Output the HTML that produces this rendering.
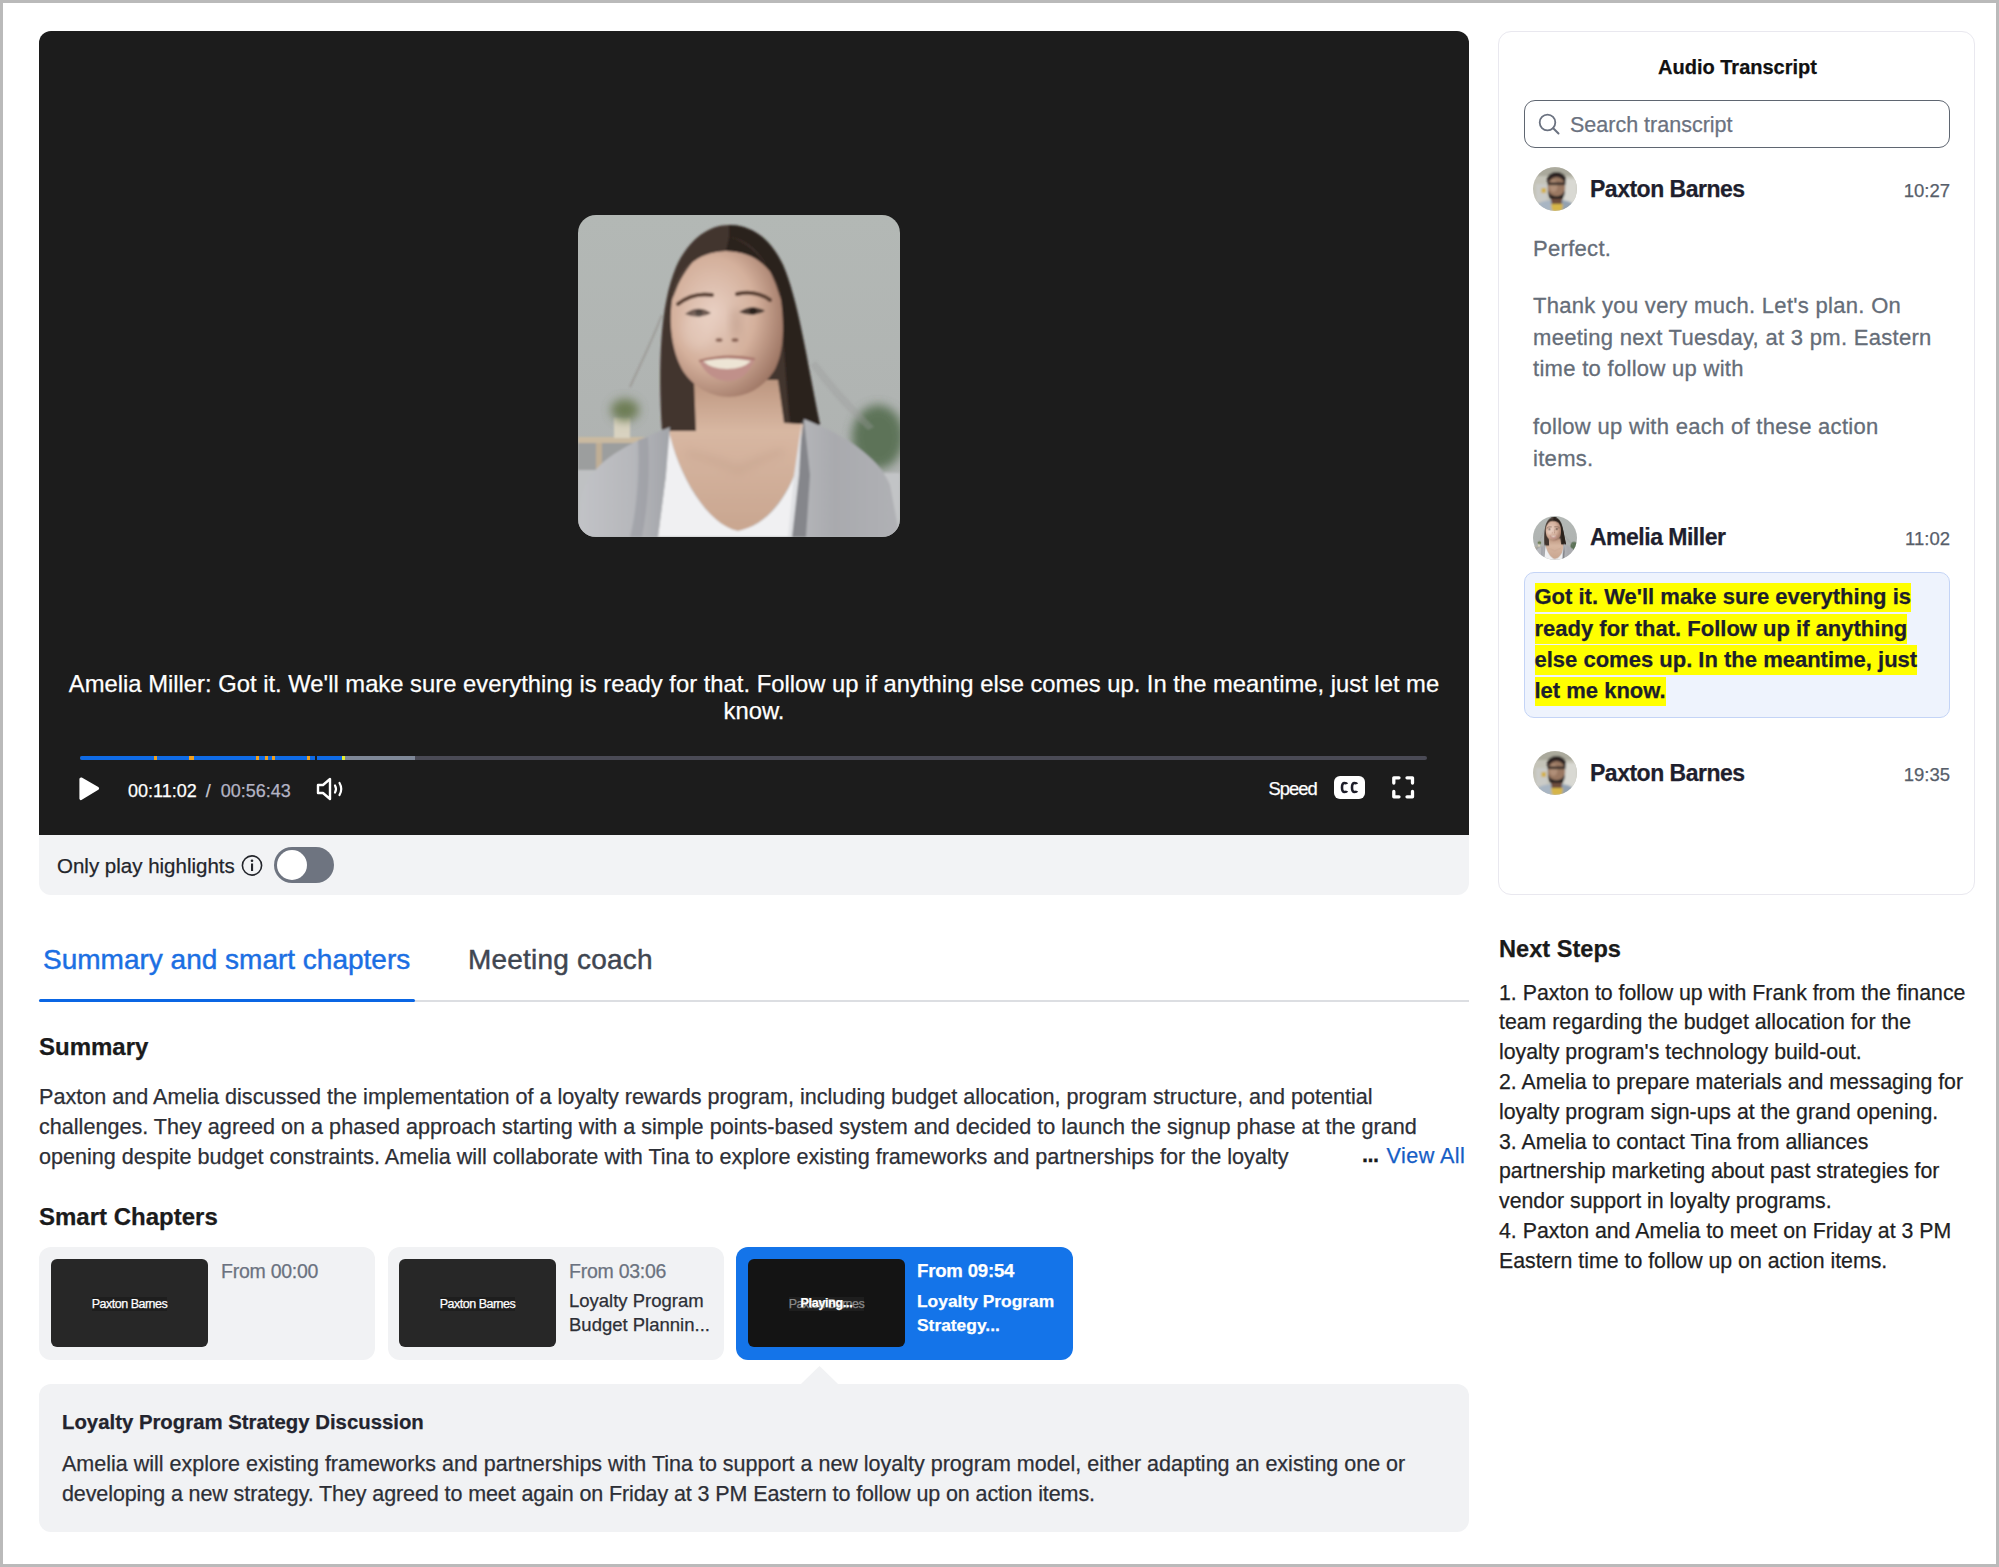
<!DOCTYPE html>
<html><head><meta charset="utf-8">
<style>
*{box-sizing:border-box;margin:0;padding:0}
html,body{width:1999px;height:1567px;overflow:hidden;background:#fff}
body{font-family:"Liberation Sans",sans-serif;position:relative;-webkit-text-stroke-width:0.25px}
.frame{position:absolute;left:0;top:0;width:1999px;height:1567px;border:3px solid #bababa;pointer-events:none;z-index:50}
.abs{position:absolute}
.nw{white-space:nowrap}
/* video */
#video{left:39px;top:31px;width:1430px;height:804px;background:#1c1c1c;border-radius:12px 12px 0 0;overflow:hidden}
#hl{left:39px;top:835px;width:1430px;height:60px;background:#f2f3f5;border-radius:0 0 12px 12px}
#photo{left:578px;top:215px;width:322px;height:322px;border-radius:18px;overflow:hidden}
.cap{color:#fff;font-size:23.8px;line-height:27px;text-align:center;width:1430px;left:39px;top:670px}
.seg{position:absolute;top:756px;height:4px}
.tm{font-size:18px;line-height:22px;top:780px;color:#fff}
/* panel */
#panel{left:1498px;top:31px;width:477px;height:864px;border:1.6px solid #e9e8ef;border-radius:13px}
.name{font-size:23px;line-height:26px;font-weight:700;color:#1f1f2e;left:1590px;letter-spacing:-0.5px}
.time{font-size:18.5px;line-height:26px;color:#575e6a;right:49px;text-align:right}
.tx{font-size:22px;line-height:31.5px;color:#656d78;left:1533px;letter-spacing:0.3px;-webkit-text-stroke:0.3px #656d78}
.yl{background:#ffff00;padding:2.5px 0 2px}
.thumb{width:157px;height:88px;background:#272727;border-radius:6px;text-align:center;line-height:88px}
.thumb span{font-size:12.5px;color:#fff;letter-spacing:-0.5px;background:#1e1e1e}
.ct{font-size:18.5px;line-height:24px}
.av{position:absolute;width:44px;height:44px;border-radius:50%;overflow:hidden;left:1533px}
</style></head>
<body>
<div class="frame"></div>
<svg width="0" height="0" style="position:absolute">
<defs>
<filter id="pb" x="-20%" y="-20%" width="140%" height="140%"><feGaussianBlur stdDeviation="0.9"/></filter>
<g id="pax">
<rect width="44" height="44" fill="#c4c3b8"/>
<g filter="url(#pb)">
<rect x="0" y="0" width="44" height="9" fill="#aaa99c"/>
<rect x="31" y="12" width="13" height="26" fill="#d9d9d3"/>
<rect x="3" y="17" width="11" height="18" fill="#cacbc7"/>
<rect x="8.5" y="21" width="4.5" height="5" fill="#d2b04a"/>
<ellipse cx="23.5" cy="13" rx="9.5" ry="8" fill="#2a2220"/>
<ellipse cx="23.5" cy="20.5" rx="8.8" ry="10.5" fill="#9a7862"/>
<ellipse cx="20.5" cy="19" rx="4" ry="6" fill="#b08f78"/>
<rect x="14.5" y="15.5" width="18" height="2.6" fill="#2e2624"/>
<path d="M15,23 C15,31 19,34.5 23.5,34.5 C28,34.5 32,31 32,23 C30,27.5 27.5,29 23.5,29 C19.5,29 17,27.5 15,23 Z" fill="#262020"/>
<rect x="18" y="32" width="11" height="6" fill="#6e4e3c"/>
<path d="M0,44 L0,40 C4,36 10,34 18,33 L20,44 Z" fill="#a8b5c3"/>
<path d="M44,44 L44,40 C40,36 36,34 29,33 L28,44 Z" fill="#93a1b0"/>
<path d="M18,37 L30,37 L29,44 L19,44 Z" fill="#d6b54a"/>
</g>
</g>
</defs></svg>

<!-- ============ VIDEO ============ -->
<div id="video" class="abs"></div>
<div id="photo" class="abs">
<svg width="322" height="322" viewBox="0 0 322 322">
<defs>
<filter id="bl" x="-10%" y="-10%" width="120%" height="120%"><feGaussianBlur stdDeviation="1.2"/></filter>
<filter id="bl4" x="-50%" y="-50%" width="200%" height="200%"><feGaussianBlur stdDeviation="5"/></filter>
<linearGradient id="bg" x1="0" y1="0" x2="0" y2="1"><stop offset="0" stop-color="#b3b8b5"/><stop offset="1" stop-color="#aeb1b0"/></linearGradient>
<radialGradient id="skin" cx="0.38" cy="0.42" r="0.75"><stop offset="0" stop-color="#e8cfc2"/><stop offset="0.5" stop-color="#d4b09c"/><stop offset="1" stop-color="#8e6554"/></radialGradient>
<linearGradient id="neck" x1="0" y1="0" x2="0" y2="1"><stop offset="0" stop-color="#b58d76"/><stop offset="0.4" stop-color="#d8b7a2"/><stop offset="1" stop-color="#c9a690"/></linearGradient>
<linearGradient id="cardL" x1="0" y1="0" x2="1" y2="0"><stop offset="0" stop-color="#c2c3c7"/><stop offset="0.6" stop-color="#b6b7bb"/><stop offset="1" stop-color="#a2a4a9"/></linearGradient>
<linearGradient id="cardR" x1="0" y1="0" x2="1" y2="0"><stop offset="0" stop-color="#b8b9bd"/><stop offset="0.4" stop-color="#a9aaae"/><stop offset="1" stop-color="#b0b1b5"/></linearGradient>
</defs>
<g id="ame"><rect width="322" height="322" fill="url(#bg)"/>
<g filter="url(#bl)">
<rect x="0" y="222" width="80" height="6" fill="#c9b9a0"/>
<rect x="0" y="228" width="80" height="30" fill="#9c9e9e"/>
<rect x="18" y="228" width="6" height="30" fill="#bfae95"/>
<rect x="0" y="255" width="40" height="67" fill="#bfc1c3"/>
<rect x="36" y="203" width="16" height="20" fill="#d8d2c0"/>
<ellipse cx="47" cy="195" rx="14" ry="11" fill="#6d7d55" filter="url(#bl4)"/>
<ellipse cx="300" cy="222" rx="26" ry="32" fill="#5d7358" filter="url(#bl4)"/>
<rect x="292" y="258" width="30" height="64" fill="#c2c4c6"/>
<!-- chest skin -->
<path d="M116,150 L200,150 L206,200 L228,204 L220,250 C210,280 190,310 160,316 C130,310 100,260 90,212 L110,204 Z" fill="url(#neck)"/>
<!-- hair back with neck notch -->
<path d="M84,216 C80,150 82,90 98,52 C112,22 132,10 151,10 C172,10 192,22 205,50 C220,85 228,140 242,210 L206,208 L200,165 L116,165 L118,216 Z" fill="#43362f"/>
<path d="M151,10 C172,10 192,22 205,50 C220,85 228,140 242,210 L212,208 C206,150 206,110 200,80 C192,45 172,24 151,22 Z" fill="#2a211d"/>
<path d="M232,150 C250,175 268,195 290,215 L296,212 C275,190 256,170 238,146 Z" fill="#9a9c9b" opacity="0.35"/>
<!-- face -->
<path d="M148,36 C178,36 199,55 203,85 C207,115 205,140 196,156 C185,173 168,182 151,182 C132,182 115,171 105,156 C96,141 90,115 94,85 C98,55 120,36 148,36 Z" fill="url(#skin)"/>
<!-- hairline part -->
<path d="M151,22 C135,26 115,40 100,70 L94,85 C98,55 120,36 148,36 Z" fill="#43362f"/>
<path d="M151,22 C168,26 188,42 198,70 L203,85 C199,55 178,36 148,36 Z" fill="#2a211d"/>
<path d="M84,100 C72,130 62,150 52,172" stroke="#6a5a52" stroke-width="0.8" fill="none" opacity="0.7"/>
<!-- brows/eyes -->
<path d="M100,89 Q115,77 134,80" stroke="#5c4236" stroke-width="4" fill="none" stroke-linecap="round"/>
<path d="M159,79 Q178,75 192,85" stroke="#5c4236" stroke-width="4" fill="none" stroke-linecap="round"/>
<path d="M107,99 Q120,89 133,98 Q120,105 107,99 Z" fill="#5a463e"/><circle cx="121" cy="98" r="3.6" fill="#2e2420"/>
<path d="M161,97 Q174,88 187,96 Q174,103 161,97 Z" fill="#4e3d36"/><circle cx="175" cy="96" r="3.6" fill="#2a201c"/>
<!-- nose -->
<ellipse cx="158" cy="108" rx="5" ry="16" fill="#a98472" opacity="0.4" filter="url(#bl4)"/>
<ellipse cx="141" cy="125" rx="3.5" ry="2" fill="#7a5446" opacity="0.8"/>
<ellipse cx="157" cy="125" rx="3.5" ry="2" fill="#7a5446" opacity="0.8"/>
<ellipse cx="120" cy="115" rx="16" ry="20" fill="#f0dcd0" opacity="0.3" filter="url(#bl4)"/>
<!-- mouth -->
<path d="M121,146 Q149,137 177,144 Q168,166 150,166 Q130,165 121,146 Z" fill="#c0908a"/>
<path d="M125,146 Q150,141 173,146 Q165,154 149,154 Q133,154 125,146 Z" fill="#ede5d5"/>
<path d="M121,146 Q149,138 177,144" stroke="#a7766a" stroke-width="2" fill="none"/>
<!-- collarbone shade -->
<path d="M108,238 Q140,244 160,256 Q180,244 206,236" stroke="#b08c78" stroke-width="5" fill="none" opacity="0.3" filter="url(#bl4)"/>
<!-- shirt -->
<path d="M90,212 C100,262 130,310 160,316 C190,310 210,282 220,250 L214,322 L80,322 L88,260 Z" fill="#f0f0f2"/>
<!-- cardigan left -->
<path d="M0,322 L4,280 C12,250 40,232 92,212 L88,260 L80,322 Z" fill="url(#cardL)"/>
<path d="M60,225 C62,260 58,300 52,322 L64,322 C70,290 72,255 70,222 Z" fill="#979aa0" opacity="0.6"/>
<!-- cardigan right -->
<path d="M226,204 C262,218 300,240 312,270 L322,322 L212,322 L218,260 Z" fill="url(#cardR)"/>
<path d="M226,204 L218,260 L212,322 L228,322 L232,260 Z" fill="#85868b"/>
<path d="M224,205 L216,260 L210,322 L214,322 L221,260 Z" fill="#e0e1e4"/>
</g></g>
</svg>
</div>
<div class="abs cap">Amelia Miller: Got it. We'll make sure everything is ready for that. Follow up if anything else comes up. In the meantime, just let me<br>know.</div>

<!-- progress bar -->
<div class="seg" style="left:80px;width:1347px;background:#4a4a55;border-radius:2px"></div>
<div class="seg" style="left:343px;width:72px;background:#7f8898"></div>
<div class="seg" style="left:80px;width:263px;background:#0f6be6;border-radius:2px 0 0 2px"></div>
<div class="seg" style="left:315px;width:2px;background:#1c1c1c"></div>
<div class="seg" style="left:154px;width:3px;background:#f0a020"></div>
<div class="seg" style="left:189px;width:5px;background:#f0a020"></div>
<div class="seg" style="left:256px;width:3px;background:#f0a020"></div>
<div class="seg" style="left:265px;width:3px;background:#f0a020"></div>
<div class="seg" style="left:272px;width:3px;background:#f0a020"></div>
<div class="seg" style="left:307px;width:3px;background:#f0a020"></div>
<div class="seg" style="left:342px;width:3px;background:#e6ee30"></div>

<!-- controls -->
<svg class="abs" style="left:76px;top:774px" width="28" height="30" viewBox="0 0 28 30">
<path d="M5,5 L21.5,14.5 L5,24.5 Z" fill="#fff" stroke="#fff" stroke-width="3.2" stroke-linejoin="round"/>
</svg>
<div class="abs tm nw" style="left:128px">00:11:02<span style="color:#c8c8d0;margin:0 10px 0 9px">/</span><span style="color:#b4b4c4">00:56:43</span></div>
<svg class="abs" style="left:315px;top:776px" width="32" height="26" viewBox="0 0 32 26">
<path d="M3,9 L8,9 L15,3 L15,23 L8,17 L3,17 Z" fill="none" stroke="#fff" stroke-width="2.4" stroke-linejoin="round"/>
<path d="M20,9.5 Q22,13 20,16.5" fill="none" stroke="#fff" stroke-width="2.2" stroke-linecap="round"/>
<path d="M24.5,7 Q28,13 24.5,19" fill="none" stroke="#fff" stroke-width="2.2" stroke-linecap="round"/>
</svg>
<div class="abs nw" style="left:1268.5px;top:777.8px;font-size:18.4px;line-height:22px;color:#fff;letter-spacing:-1px">Speed</div>
<div class="abs" style="left:1334px;top:776px;width:31px;height:23px;background:#fff;border-radius:6px"></div>
<svg class="abs" style="left:1334px;top:776px" width="31" height="23" viewBox="0 0 31 23">
<path d="M13,8 Q12.6,7 10.5,7 Q8,7 8,11.5 Q8,16 10.5,16 Q12.6,16 13,15" fill="none" stroke="#1d1d29" stroke-width="2.6" stroke-linecap="butt"/>
<path d="M23,8 Q22.6,7 20.5,7 Q18,7 18,11.5 Q18,16 20.5,16 Q22.6,16 23,15" fill="none" stroke="#1d1d29" stroke-width="2.6" stroke-linecap="butt"/>
</svg>
<svg class="abs" style="left:1391px;top:775px" width="25" height="25" viewBox="0 0 25 25">
<path d="M2.8,8 L2.8,2.8 L8,2.8 M16,2.8 L21.5,2.8 L21.5,8 M21.5,16.5 L21.5,21.8 L16,21.8 M8,21.8 L2.8,21.8 L2.8,16.5" fill="none" stroke="#fff" stroke-width="3.3" stroke-linecap="round" stroke-linejoin="round"/>
</svg>

<!-- highlights bar -->
<div id="hl" class="abs"></div>
<div class="abs nw" style="left:57px;top:854px;font-size:20.5px;line-height:24px;color:#23252b">Only play highlights</div>
<svg class="abs" style="left:240px;top:854px" width="24" height="24" viewBox="0 0 24 24">
<circle cx="12" cy="11.5" r="9.6" fill="none" stroke="#23252b" stroke-width="1.6"/>
<rect x="11" y="9.5" width="2.1" height="7.5" fill="#23252b"/>
<circle cx="12" cy="6.8" r="1.3" fill="#23252b"/>
</svg>
<div class="abs" style="left:274px;top:847px;width:60px;height:36px;border-radius:18px;background:#6e7480"></div>
<div class="abs" style="left:277px;top:850px;width:30px;height:30px;border-radius:50%;background:#fff"></div>

<!-- ============ PANEL ============ -->
<div id="panel" class="abs"></div>
<div class="abs nw" style="left:1499px;width:477px;text-align:center;top:55px;font-size:20px;line-height:24px;font-weight:700;color:#111">Audio Transcript</div>
<div class="abs" style="left:1523.5px;top:100px;width:426.5px;height:48px;border:1.8px solid #5f6671;border-radius:11px"></div>
<svg class="abs" style="left:1537px;top:112px" width="25" height="25" viewBox="0 0 25 25">
<circle cx="10.5" cy="10.5" r="7.8" fill="none" stroke="#6b7280" stroke-width="1.8"/>
<path d="M16.2,16.2 L21.5,21.5" stroke="#6b7280" stroke-width="2" stroke-linecap="round"/>
</svg>
<div class="abs nw" style="left:1570px;top:113px;font-size:21.5px;line-height:24px;color:#6b7280">Search transcript</div>

<div class="av" style="top:167px"><svg width="44" height="44" viewBox="0 0 44 44"><use href="#pax"/></svg></div>
<div class="abs nw name" style="top:175.5px">Paxton Barnes</div>
<div class="abs nw time" style="top:177.5px">10:27</div>
<div class="abs nw tx" style="top:232.5px">Perfect.</div>
<div class="abs nw tx" style="top:290px">Thank you very much. Let's plan. On<br>meeting next Tuesday, at 3 pm. Eastern<br>time to follow up with</div>
<div class="abs nw tx" style="top:411px">follow up with each of these action<br>items.</div>

<div class="av" style="top:515.5px"><svg width="44" height="44" viewBox="0 0 322 322"><use href="#ame"/></svg></div>
<div class="abs nw name" style="top:524.3px">Amelia Miller</div>
<div class="abs nw time" style="top:525.5px">11:02</div>
<div class="abs" style="left:1524px;top:572px;width:426px;height:146px;background:#eef3fd;border:1.5px solid #c4d4f6;border-radius:10px"></div>
<div class="abs nw" style="left:1534.5px;top:582.4px;font-size:22px;line-height:31.2px;font-weight:700;color:#1d1e2c"><span class="yl"><span style="position:relative;top:-1px">Got it. We'll make sure everything is</span></span><br><span class="yl"><span style="position:relative;top:-1px">ready for that. Follow up if anything</span></span><br><span class="yl"><span style="position:relative;top:-1px">else comes up. In the meantime, just</span></span><br><span class="yl"><span style="position:relative;top:-1px">let me know.</span></span></div>

<div class="av" style="top:751px"><svg width="44" height="44" viewBox="0 0 44 44"><use href="#pax"/></svg></div>
<div class="abs nw name" style="top:759.5px">Paxton Barnes</div>
<div class="abs nw time" style="top:761.5px">19:35</div>


<!-- ============ NEXT STEPS ============ -->
<div class="abs nw" style="left:1499px;top:933px;font-size:23.6px;line-height:32px;font-weight:700;color:#1a1a1a">Next Steps</div>
<div class="abs nw" style="left:1499px;top:978.6px;font-size:21.3px;line-height:29.8px;color:#1f1f23">1. Paxton to follow up with Frank from the finance<br>team regarding the budget allocation for the<br>loyalty program's technology build-out.<br>2. Amelia to prepare materials and messaging for<br>loyalty program sign-ups at the grand opening.<br>3. Amelia to contact Tina from alliances<br>partnership marketing about past strategies for<br>vendor support in loyalty programs.<br>4. Paxton and Amelia to meet on Friday at 3 PM<br>Eastern time to follow up on action items.</div>

<!-- ============ TABS ============ -->
<div class="abs nw" style="left:43px;top:943.3px;font-size:28px;line-height:34px;color:#1b6fe3;-webkit-text-stroke:0.45px #1b6fe3">Summary and smart chapters</div>
<div class="abs nw" style="left:468px;top:943.3px;font-size:28px;line-height:34px;color:#3f4651;-webkit-text-stroke:0.45px #3f4651;letter-spacing:0.2px">Meeting coach</div>
<div class="abs" style="left:39px;top:1000px;width:1430px;height:2px;background:#dcdee2"></div>
<div class="abs" style="left:39px;top:999px;width:376px;height:3px;background:#0a66e4;border-radius:2px"></div>

<div class="abs nw" style="left:39px;top:1030px;font-size:24px;line-height:34px;font-weight:700;color:#1b1b1b">Summary</div>
<div class="abs nw" style="left:39px;top:1081.5px;font-size:21.6px;line-height:30px;color:#2d2f36">Paxton and Amelia discussed the implementation of a loyalty rewards program, including budget allocation, program structure, and potential<br>challenges. They agreed on a phased approach starting with a simple points-based system and decided to launch the signup phase at the grand<br>opening despite budget constraints. Amelia will collaborate with Tina to explore existing frameworks and partnerships for the loyalty</div>
<div class="abs nw" style="left:1362px;top:1139.5px;font-size:21.6px;line-height:30px;color:#1a1a1a;font-weight:700;letter-spacing:-0.5px">...</div>
<div class="abs nw" style="left:1386.5px;top:1140.5px;font-size:21.6px;line-height:30px;color:#165ec6;letter-spacing:0.45px">View All</div>

<div class="abs nw" style="left:39px;top:1200px;font-size:24px;line-height:34px;font-weight:700;color:#1b1b1b">Smart Chapters</div>

<!-- cards -->
<div class="abs" style="left:39px;top:1247px;width:336px;height:113px;background:#f1f2f4;border-radius:12px"></div>
<div class="abs thumb" style="left:51px;top:1259px"><span>Paxton Barnes</span></div>
<div class="abs nw ct" style="left:221px;top:1258.8px;color:#6b7280;font-size:19.5px;letter-spacing:-0.25px">From 00:00</div>

<div class="abs" style="left:388px;top:1247px;width:336px;height:113px;background:#f1f2f4;border-radius:12px"></div>
<div class="abs thumb" style="left:399px;top:1259px"><span>Paxton Barnes</span></div>
<div class="abs nw ct" style="left:569px;top:1258.8px;color:#6b7280;font-size:19.5px;letter-spacing:-0.25px">From 03:06</div>
<div class="abs nw ct" style="left:569px;top:1288.6px;color:#2d2f36">Loyalty Program<br>Budget Plannin...</div>

<div class="abs" style="left:736px;top:1247px;width:337px;height:113px;background:#1474e9;border-radius:12px"></div>
<div class="abs thumb" style="left:748px;top:1259px;background:#141414"><span style="color:#8a8a8a">Paxton Barnes</span></div>
<div class="abs nw" style="left:748px;top:1259px;width:157px;height:88px;line-height:88px;text-align:center;font-size:12.5px;font-weight:700;color:#fff;letter-spacing:-0.3px">Playing...</div>
<div class="abs nw ct" style="left:917px;top:1259px;color:#fff;font-weight:700;font-size:18.6px;letter-spacing:-0.2px">From 09:54</div>
<div class="abs nw ct" style="left:917px;top:1288.6px;color:#fff;font-weight:700;font-size:17.4px">Loyalty Program<br>Strategy...</div>

<!-- pointer + description -->
<svg class="abs" style="left:800px;top:1365px" width="40" height="20" viewBox="0 0 40 20"><path d="M1,19 L19.5,1 L38,19 Z" fill="#f1f2f4"/></svg>
<div class="abs" style="left:39px;top:1384px;width:1430px;height:148px;background:#f1f2f4;border-radius:12px"></div>
<div class="abs nw" style="left:62px;top:1407px;font-size:20.35px;line-height:30px;font-weight:700;color:#23242e">Loyalty Program Strategy Discussion</div>
<div class="abs nw" style="left:62px;top:1448.5px;font-size:21.5px;line-height:30px;color:#2d2f36">Amelia will explore existing frameworks and partnerships with Tina to support a new loyalty program model, either adapting an existing one or<br><span style="letter-spacing:-0.1px">developing a new strategy. They agreed to meet again on Friday at 3 PM Eastern to follow up on action items.</span></div>

</body></html>
